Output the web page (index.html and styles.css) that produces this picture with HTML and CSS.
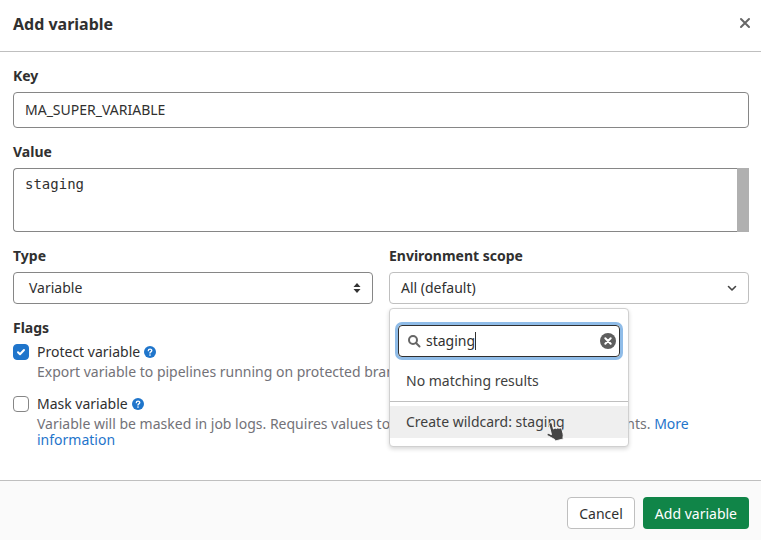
FILE: index.html
```html
<!DOCTYPE html>
<html lang="en">
<head>
    <meta charset="UTF-8">
    <meta name="viewport" content="width=device-width, initial-scale=1.0">
    <title>Add variable</title>
    <link rel="stylesheet" href="styles.css">
</head>
<body>
    <div class="modal">
        <header class="modal-header">
            <h2>Add variable</h2>
            <svg class="close-icon" width="16" height="16" viewBox="0 0 16 16"><path d="M4 4l8 8M12 4l-8 8" stroke="#666" stroke-width="2" stroke-linecap="round" fill="none"/></svg>
        </header>

        <form class="modal-body">
            <label class="field-label">Key</label>
            <div class="input">MA_SUPER_VARIABLE</div>

            <label class="field-label">Value</label>
            <div class="textarea">
                <div class="textarea-text">staging</div>
                <div class="scrollbar"></div>
            </div>

            <div class="two-cols">
                <div class="col">
                    <label class="field-label">Type</label>
                    <div class="select select-type">
                        <span>Variable</span>
                        <svg width="8" height="12" viewBox="0 0 8 12"><path d="M4 1l3.500 4h-7zM4 11L.5 7h7z" fill="#333"/></svg>
                    </div>
                </div>
                <div class="col col-env">
                    <label class="field-label">Environment scope</label>
                    <div class="select select-env">
                        <span>All (default)</span>
                        <svg width="16" height="16" viewBox="0 0 16 16"><path d="M4.500 6.500L8 10l3.500-3.500" stroke="#444" stroke-width="1.600" stroke-linecap="round" stroke-linejoin="round" fill="none"/></svg>
                    </div>

                    <div class="dropdown">
                        <div class="search-box">
                            <svg class="search-icon" width="16" height="16" viewBox="0 0 16 16"><circle cx="7" cy="7" r="4" stroke="#666" stroke-width="2" fill="none"/><path d="M10 10l3.500 3.500" stroke="#666" stroke-width="2" stroke-linecap="round"/></svg>
                            <span class="search-text">staging</span>
                            <span class="caret"></span>
                            <svg class="clear-icon" width="16" height="16" viewBox="0 0 16 16"><circle cx="8" cy="8" r="8" fill="#5e5e5e"/><path d="M5.300 5.300l5.400 5.400M10.700 5.300l-5.400 5.400" stroke="#fff" stroke-width="2" stroke-linecap="round"/></svg>
                        </div>
                        <div class="no-results">No matching results</div>
                        <div class="dropdown-divider"></div>
                        <div class="dropdown-item">Create wildcard: staging</div>
                    </div>
                    <svg class="hand-cursor" width="24" height="24" viewBox="0 0 24 24">
                        <path transform="rotate(-14 11 12)" d="M6 3c0-1.800 3.200-1.800 3.200 0v5.500c1.200-.7 2.400-.5 2.800.3 1.100-.6 2.400-.3 2.800.6 1.100-.5 2.400-.1 2.600 1.100v5c0 1.500-.5 2.500-1 3.500v1.500H8V19L2 13.500c-1-1.200.5-2.800 2-1.500l2 1.500z" fill="#444" stroke="#fff" stroke-width=".8" stroke-linejoin="round"/>
                    </svg>
                </div>
            </div>

            <label class="field-label flags-label">Flags</label>
            <div class="check-row">
                <span class="checkbox checked">
                    <svg width="10" height="10" viewBox="0 0 10 10"><path d="M2 5.200l2 2 4-4.200" stroke="#fff" stroke-width="2" stroke-linecap="round" stroke-linejoin="round" fill="none"/></svg>
                </span>
                <div class="check-text">
                    <div class="check-title">Protect variable
                        <svg class="help-icon" width="12" height="12" viewBox="0 0 12 12"><circle cx="6" cy="6" r="6" fill="#1f75cb"/><path d="M4.300 4.700c0-2.200 3.500-2.200 3.500-.1 0 1.300-1.800 1.300-1.800 2.500" stroke="#fff" stroke-width="1.300" fill="none" stroke-linecap="round"/><circle cx="6" cy="9.100" r=".8" fill="#fff"/></svg>
                    </div>
                    <div class="check-help">Export variable to pipelines running on protected branches and tags only.</div>
                </div>
            </div>
            <div class="check-row">
                <span class="checkbox"></span>
                <div class="check-text">
                    <div class="check-title">Mask variable
                        <svg class="help-icon" width="12" height="12" viewBox="0 0 12 12"><circle cx="6" cy="6" r="6" fill="#1f75cb"/><path d="M4.300 4.700c0-2.200 3.500-2.200 3.500-.1 0 1.300-1.800 1.300-1.800 2.500" stroke="#fff" stroke-width="1.300" fill="none" stroke-linecap="round"/><circle cx="6" cy="9.100" r=".8" fill="#fff"/></svg>
                    </div>
                    <div class="check-help">Variable will be masked in job logs. Requires values to meet regular expression requirements. <a href="#">More information</a></div>
                </div>
            </div>
        </form>

        <footer class="modal-footer">
            <button class="btn btn-cancel" type="button">Cancel</button>
            <button class="btn btn-confirm" type="button">Add variable</button>
        </footer>
    </div>
</body>
</html>
```

FILE: styles.css
```css
* {
    box-sizing: border-box;
}
html, body {
    height: 100%;
}
body {
    font-family: "Noto Sans", Arial, sans-serif;
    font-size: 14px;
    line-height: 16px;
    color: #303030;
    background-color: #ffffff;
    margin: 0;
    overflow: hidden;
}
.modal {
    height: 540px;
    display: flex;
    flex-direction: column;
}
.modal-header {
    height: 52px;
    flex-shrink: 0;
    padding: 0 8px 4px 13px;
    display: flex;
    align-items: center;
    justify-content: space-between;
    border-bottom: 1px solid #bfbfbf;
}
.modal-header h2 {
    margin: 0;
    font-size: 16px;
    font-weight: 700;
    line-height: 20px;
}
.close-icon {
    margin-bottom: 2px;
}
.modal-body {
    flex: 1;
    padding: 16px 12px 0 13px;
}
.field-label {
    display: block;
    font-weight: 700;
    line-height: 16px;
    margin-bottom: 8px;
}
.input {
    height: 36px;
    margin-bottom: 16px;
    padding: 0 11px;
    line-height: 34px;
    border: 1px solid #868686;
    border-radius: 4px;
}
.textarea {
    height: 64px;
    margin-bottom: 16px;
    display: flex;
    border: 1px solid #868686;
    border-right: none;
    border-radius: 4px 0 0 4px;
}
.textarea-text {
    flex: 1;
    padding: 7px 11px;
    font-family: "DejaVu Sans Mono", monospace;
    font-size: 14px;
    line-height: 16px;
}
.scrollbar {
    width: 12px;
    margin: -1px 0;
    background-color: #b0b0b0;
}
.two-cols {
    display: flex;
    gap: 16px;
    margin-bottom: 16px;
}
.col {
    flex: 1;
    position: relative;
}
.select {
    height: 32px;
    display: flex;
    align-items: center;
    justify-content: space-between;
    border: 1px solid #868686;
    border-radius: 4px;
}
.select-type {
    padding: 0 11px 0 15px;
}
.select-env {
    padding: 0 8px 0 11px;
    border-color: #bfbfbf;
}
.dropdown {
    position: absolute;
    top: 60px;
    left: 0;
    width: 240px;
    height: 139px;
    z-index: 2;
    padding: 8px 0;
    background-color: #ffffff;
    border: 1px solid #d0d0d0;
    border-radius: 4px;
    box-shadow: 0 2px 4px rgba(0, 0, 0, 0.16);
}
.search-box {
    height: 32px;
    margin: 8px 8px 0;
    padding: 0 3px 0 7px;
    display: flex;
    align-items: center;
    border: 1px solid #303030;
    border-radius: 4px;
    box-shadow: 0 0 0 3px #8fbce8;
}
.search-icon {
    flex-shrink: 0;
}
.search-text {
    margin-left: 4px;
}
.caret {
    width: 1px;
    height: 18px;
    background-color: #303030;
}
.clear-icon {
    margin-left: auto;
}
.no-results {
    padding: 16px 16px 0;
    height: 44px;
    color: #404040;
}
.dropdown-divider {
    border-top: 1px solid #bfbfbf;
}
.dropdown-item {
    margin-top: 4px;
    height: 32px;
    padding: 0 16px;
    line-height: 32px;
    color: #404040;
    background-color: #efefef;
}
.hand-cursor {
    position: absolute;
    top: 172px;
    left: 156px;
    z-index: 3;
}
.flags-label {
    margin-bottom: 8px;
}
.check-row {
    display: flex;
    gap: 8px;
    margin-bottom: 16px;
}
.checkbox {
    width: 16px;
    height: 16px;
    flex-shrink: 0;
    display: flex;
    align-items: center;
    justify-content: center;
    border: 1px solid #868686;
    border-radius: 4px;
}
.checkbox.checked {
    border-color: #1f75cb;
    background-color: #1f75cb;
}
.check-title {
    display: flex;
    align-items: center;
    gap: 4px;
    line-height: 16px;
    margin-bottom: 4px;
}
.check-help {
    color: #737278;
    line-height: 16px;
}
.check-help a {
    color: #1f75cb;
    text-decoration: none;
}
.modal-footer {
    height: 60px;
    flex-shrink: 0;
    padding: 16px 12px 0 0;
    display: flex;
    justify-content: flex-end;
    gap: 8px;
    background-color: #fafafa;
    border-top: 1px solid #bfbfbf;
}
.btn {
    height: 32px;
    padding: 0 12px;
    font-family: inherit;
    font-size: 14px;
    border-radius: 4px;
    cursor: pointer;
}
.btn-cancel {
    padding: 0 11px;
    color: #303030;
    background-color: #ffffff;
    border: 1px solid #bfbfbf;
}
.btn-confirm {
    color: #ffffff;
    background-color: #108548;
    border: none;
}
```
